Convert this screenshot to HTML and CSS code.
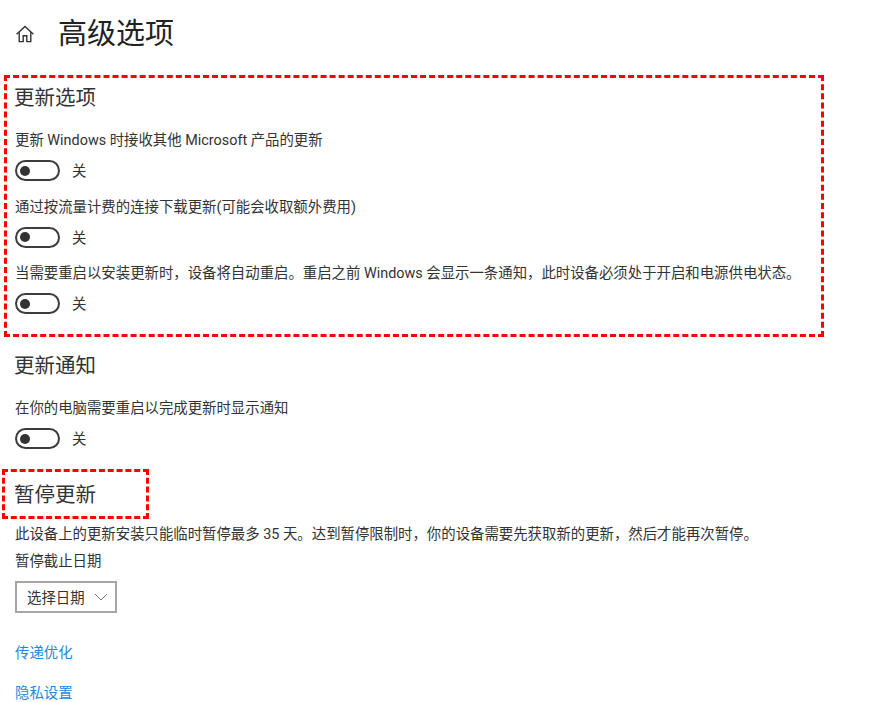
FILE: index.html
```html
<!DOCTYPE html>
<html lang="zh-CN">
<head>
    <meta charset="UTF-8">
    <meta name="viewport" content="width=device-width, initial-scale=1.0">
    <title>高级选项</title>
    <link rel="stylesheet" href="styles.css">
</head>
<body>
    <div class="page-header">
        <svg class="home-icon" width="20" height="20" viewBox="0 0 20 20" fill="none" stroke="#333" stroke-width="1.4">
            <path d="M1.6 10.2 10 2.4l8.4 7.8"/>
            <path d="M4.2 8.2V17.6h4v-5.8h3.6v5.8h4V8.2"/>
        </svg>
        <h1>高级选项</h1>
    </div>

    <!-- Update options, marked with the red frame -->
    <div class="update-options marked">
        <h2>更新选项</h2>
        <p class="label first">更新 Windows 时接收其他 Microsoft 产品的更新</p>
        <div class="toggle-row"><span class="toggle"></span><span class="toggle-text">关</span></div>
        <p class="label">通过按流量计费的连接下载更新(可能会收取额外费用)</p>
        <div class="toggle-row"><span class="toggle"></span><span class="toggle-text">关</span></div>
        <p class="label">当需要重启以安装更新时，设备将自动重启。重启之前 Windows 会显示一条通知，此时设备必须处于开启和电源供电状态。</p>
        <div class="toggle-row"><span class="toggle"></span><span class="toggle-text">关</span></div>
    </div>

    <div class="update-notify">
        <h2>更新通知</h2>
        <p class="label first">在你的电脑需要重启以完成更新时显示通知</p>
        <div class="toggle-row"><span class="toggle"></span><span class="toggle-text">关</span></div>
    </div>

    <div class="pause-title marked">
        <h2>暂停更新</h2>
    </div>

    <div class="pause-body">
        <p class="label">此设备上的更新安装只能临时暂停最多 35 天。达到暂停限制时，你的设备需要先获取新的更新，然后才能再次暂停。</p>
        <p class="label date-label">暂停截止日期</p>
        <div class="date-select">
            <span class="date-text">选择日期</span>
            <svg width="14" height="8" viewBox="0 0 14 8" fill="none" stroke="#777" stroke-width="1">
                <path d="M1 1l6 6 6-6"/>
            </svg>
        </div>
        <a class="link" href="#">传递优化</a>
        <a class="link" href="#">隐私设置</a>
    </div>
</body>
</html>
```

FILE: styles.css
```css
body {
    margin: 0;
    background-color: #fff;
    color: #333;
    font-family: Roboto, "Noto Sans CJK SC", sans-serif;
    font-size: 14.4px;
    line-height: 20px;
}
h1, h2, p {
    margin: 0;
    font-weight: 400;
}
h1 {
    font-size: 29px;
    line-height: 40px;
    color: #222;
}
h2 {
    margin-left: -1px;
    font-size: 20.5px;
    line-height: 30px;
}
.page-header {
    display: flex;
    align-items: center;
    gap: 23px;
    height: 75px;
    padding: 14px 0 21px 15px;
    box-sizing: border-box;
}
.marked {
    border: 3px dashed #f00;
}
.update-options {
    width: 820px;
    height: 262px;
    margin-left: 4px;
    padding: 5px 0 0 8px;
    box-sizing: border-box;
}
.label {
    margin-top: 16.5px;
}
.label.first {
    margin-top: 18px;
}
.toggle-row {
    display: flex;
    align-items: center;
    gap: 12px;
    height: 21px;
    margin-top: 9px;
}
.toggle {
    position: relative;
    width: 45px;
    height: 21px;
    border: 2px solid #3c3c3c;
    border-radius: 11px;
    box-sizing: border-box;
}
.toggle::after {
    content: "";
    position: absolute;
    left: 3px;
    top: 3.5px;
    width: 10px;
    height: 10px;
    border-radius: 50%;
    background-color: #333;
}
.toggle-text {
    padding-top: 3px;
}
.update-notify {
    padding: 14px 0 0 15px;
}
.pause-title {
    width: 147px;
    height: 50px;
    margin: 20px 0 0 2px;
    padding: 8px 0 0 10px;
    box-sizing: border-box;
}
.pause-body {
    padding: 6px 0 0 15px;
}
.pause-body .label {
    margin-top: 0;
}
.pause-body .date-label {
    margin-top: 7px;
}
.date-select {
    display: flex;
    align-items: center;
    gap: 9px;
    width: 102px;
    height: 32px;
    margin-top: 9px;
    padding-left: 10px;
    border: 2px solid #a6a6a6;
    box-sizing: border-box;
}
.date-text {
    padding-top: 3px;
}
.link {
    display: block;
    width: fit-content;
    margin-top: 20px;
    color: #1f87d8;
    text-decoration: none;
}
.date-select + .link {
    margin-top: 31px;
}
```
